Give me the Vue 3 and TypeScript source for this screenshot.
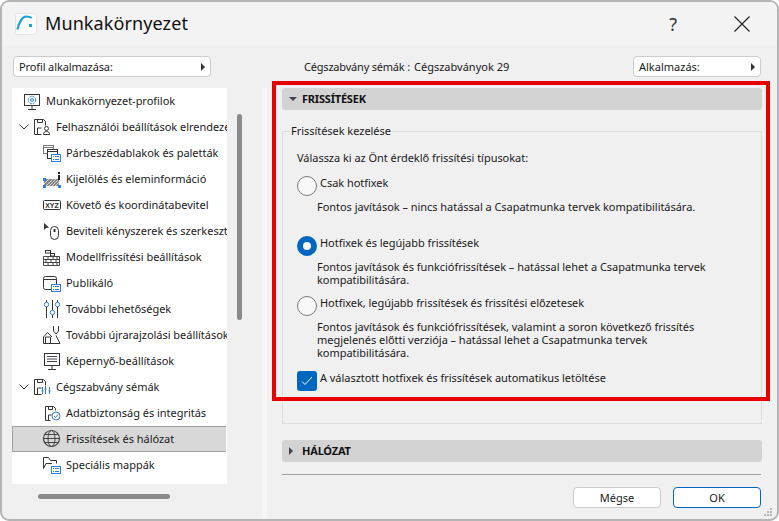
<script setup lang="ts">
interface TreeRow {
  label: string
  icon: string
  depth: number
  open?: boolean
  selected?: boolean
}

const INK = 'fill="none" stroke="#333"'
const DOT = 'fill="#fff" stroke="#2f7de1"'
const listBadge = `<rect x="9.5" y="13.5" width="9" height="7" fill="#fff" stroke="#2f7de1"/><path d="M11 15.5h1M13 15.5h4M11 18.5h1M13 18.5h4" stroke="#2f7de1"/>`
const floppy = `<path d="M2.5 19.5v-15h9l2 2v4M2.500 19.5h7" ${INK}/><path d="M5.500 4.500v3h5v-3M5.500 19v-6h4" ${INK}/>`

// 每个图标都画在 24x24 的格子里
const icons: Record<string, string> = {
  profile: `<rect x="2.5" y="5.5" width="15" height="11" ${INK}/><path d="M10 17v3M6 20.500h8" ${INK}/><circle cx="10" cy="11" r="1.500" ${DOT}/><circle cx="10" cy="11" r="3.800" fill="none" stroke="#2f7de1" stroke-dasharray="2 1"/>`,
  userDisk: `${floppy}<circle cx="14.500" cy="13.500" r="2" ${INK}/><path d="M11.500 19.500c0-2 1-3 3-3s3 1 3 3z" ${INK}/>`,
  dialogs: `<rect x="1.5" y="4.5" width="10" height="8" fill="#fff" stroke="#777"/><path d="M1.500 6.500h10" stroke="#777"/><rect x="5.500" y="8.500" width="10" height="9" fill="#fff" stroke="#333"/><path d="M5.500 10.500h10" stroke="#333"/>${listBadge}`,
  selection: `<path d="M2 12h15v7H2z" fill="#888"/><path d="M2 14l2-2M2 17l5-5M4 19l7-7M7 19l7-7M10 19l7-7M13 19l4-4" stroke="#ccc"/><rect x="1" y="11" width="3" height="3" fill="#2f7de1"/><rect x="1" y="18" width="3" height="3" fill="#2f7de1"/><rect x="16" y="18" width="3" height="3" fill="#2f7de1"/><rect x="16" y="5" width="2" height="2" fill="#222"/><rect x="16" y="8" width="2" height="5" fill="#222"/>`,
  xyz: `<rect x="1.5" y="7.5" width="17" height="9" rx="1" ${INK}/><text x="10" y="14.500" text-anchor="middle" font-family="Liberation Sans, sans-serif" font-size="7" font-weight="700" fill="#333">XYZ</text>`,
  mouse: `<path d="M2 4v7l2-2 3-.5z" fill="#333"/><rect x="8.500" y="7.500" width="8" height="13" rx="4" ${INK}/><path d="M12.500 10v3" stroke="#333" stroke-width="2"/>`,
  bricks: `<rect x="3.5" y="5.500" width="5" height="2.500" ${INK}/><rect x="8.500" y="8.500" width="4" height="2.500" ${INK}/><path d="M1.500 11.500h16v9h-16zM1.500 14.500h16M1.500 17.500h16M6 11.500v3M11 11.500v3M15 11.500v3M4 14.500v3M9 14.500v3M14 14.500v3M6 17.500v3M11 17.500v3M15 17.500v3" fill="none" stroke="#333" stroke-width=".9"/>`,
  publish: `<rect x="1.5" y="5.500" width="13" height="13" rx="2" ${INK}/><path d="M1.500 8.500h13" ${INK}/>${listBadge}`,
  options: `<path d="M4.500 3v2M4.500 10v11M10.500 3v10M10.500 18v3M15.500 3v2M15.500 10v11" ${INK}/><circle cx="4.500" cy="7.500" r="2.200" ${DOT}/><circle cx="10.500" cy="15.500" r="2.200" ${DOT}/><circle cx="15.500" cy="7.500" r="2.200" ${DOT}/>`,
  redraw: `<path d="M1.500 14l4-4.500 4.500 4.500M1.500 14v6.500h16.500l-4-8M3.500 20v-6h5v6" ${INK}/><path d="M11.500 3v5l2.500 3 2.500-3V3" ${INK}/>`,
  screen: `<rect x="2.5" y="4.500" width="15" height="12" ${INK}/><path d="M5 7.500h10M5 10h10M5 12.500h10" stroke="#445"/><path d="M10 17v3M6 20.500h8" ${INK}/>`,
  standards: `${floppy}<path d="M10.500 12v7M13.500 11v8M17.500 12v7" stroke="#2f7de1"/><path d="M9.500 16h2M12.500 14h2M16.500 16h2" stroke="#2f7de1"/>`,
  security: `<path d="M3.500 19.500v-14h8l2 2v2M3.500 19.500h5" ${INK}/><path d="M6.500 5.500v3h4v-3M6.500 19v-5h3" ${INK}/><circle cx="14" cy="15" r="4" fill="#fff" stroke="#2f7de1"/><path d="M12 15l1.500 1.500 2.500-3" fill="none" stroke="#2f7de1"/>`,
  globe: `<circle cx="9.500" cy="11.500" r="8" fill="none" stroke="#444" stroke-width="1.200"/><ellipse cx="9.500" cy="11.500" rx="3.500" ry="8" fill="none" stroke="#444"/><path d="M1.500 11.500h16M2.500 7.500h14M2.500 15.500h14" stroke="#444"/>`,
  folder: `<path d="M1.500 15.500v-11h5l2 3h6v3M1.500 15.500l2.500-5h6" ${INK}/>${listBadge}`
}

const rows: TreeRow[] = [
  { label: 'Munkakörnyezet-profilok', icon: 'profile', depth: 0 },
  { label: 'Felhasználói beállítások elrendezése', icon: 'userDisk', depth: 1, open: true },
  { label: 'Párbeszédablakok és paletták', icon: 'dialogs', depth: 2 },
  { label: 'Kijelölés és eleminformáció', icon: 'selection', depth: 2 },
  { label: 'Követő és koordinátabevitel', icon: 'xyz', depth: 2 },
  { label: 'Beviteli kényszerek és szerkesztés', icon: 'mouse', depth: 2 },
  { label: 'Modellfrissítési beállítások', icon: 'bricks', depth: 2 },
  { label: 'Publikáló', icon: 'publish', depth: 2 },
  { label: 'További lehetőségek', icon: 'options', depth: 2 },
  { label: 'További újrarajzolási beállítások', icon: 'redraw', depth: 2 },
  { label: 'Képernyő-beállítások', icon: 'screen', depth: 2 },
  { label: 'Cégszabvány sémák', icon: 'standards', depth: 1, open: true },
  { label: 'Adatbiztonság és integritás', icon: 'security', depth: 2 },
  { label: 'Frissítések és hálózat', icon: 'globe', depth: 2, selected: true },
  { label: 'Speciális mappák', icon: 'folder', depth: 2 }
]

const options = [
  {
    title: 'Csak hotfixek',
    checked: false,
    lines: ['Fontos javítások – nincs hatással a Csapatmunka tervek kompatibilitására.'],
    height: 60
  },
  {
    title: 'Hotfixek és legújabb frissítések',
    checked: true,
    lines: [
      'Fontos javítások és funkciófrissítések – hatással lehet a Csapatmunka tervek',
      'kompatibilitására.'
    ],
    height: 60
  },
  {
    title: 'Hotfixek, legújabb frissítések és frissítési előzetesek',
    checked: false,
    lines: [
      'Fontos javítások és funkciófrissítések, valamint a soron következő frissítés',
      'megjelenés előtti verziója – hatással lehet a Csapatmunka tervek',
      'kompatibilitására.'
    ],
    height: 75
  }
]

// 右下角的缩放手柄
const gripDots = [
  [6, 0],
  [3, 3],
  [6, 3],
  [0, 6],
  [3, 6],
  [6, 6]
]
</script>

<template>
  <div class="window">
    <header class="titlebar">
      <svg class="logo" width="22" height="22" viewBox="0 0 22 22">
        <rect x="0.5" y="0.5" width="21" height="21" rx="2" fill="#fbfbfb" stroke="#e4e4e4" />
        <path d="M2.500 16.500C4 9 7.500 3.500 11 3.500c2.500 0 4.500.5 5.800 1.500" fill="none" stroke="#17a3d6" stroke-width="2.200" />
        <rect x="14" y="11" width="3" height="3" fill="#17a3d6" />
      </svg>
      <h1 class="title">Munkakörnyezet</h1>
      <span class="help">?</span>
      <svg class="close" width="16" height="16" viewBox="0 0 16 16">
        <path d="M.5 .5l15 15M15.500 .5l-15 15" stroke="#222" stroke-width="1.200" />
      </svg>
    </header>

    <div class="content">
      <aside class="left">
        <div class="select profile-select"><span>Profil alkalmazása:</span><i class="arrow"></i></div>
        <div class="tree-wrap">
          <ul class="tree">
            <li
              v-for="row in rows"
              :key="row.label"
              class="row"
              :class="['depth-' + row.depth, { selected: row.selected }]"
            >
              <svg v-if="row.open" class="chevron" width="10" height="6" viewBox="0 0 10 6">
                <path d="M.5 .5L5 5 9.500 .5" fill="none" stroke="#333" />
              </svg>
              <svg class="icon" width="24" height="24" viewBox="0 0 24 24" v-html="icons[row.icon]"></svg>
              <span class="row-label">{{ row.label }}</span>
            </li>
          </ul>
          <div class="vscroll"><div class="vthumb"></div></div>
        </div>
        <div class="hscroll"><div class="hthumb"></div></div>
      </aside>

      <div class="divider"></div>

      <main class="right">
        <div class="top-line">
          <span class="scheme-key">Cégszabvány sémák :</span>
          <span class="scheme-val">Cégszabványok 29</span>
          <div class="select apply-select"><span>Alkalmazás:</span><i class="arrow"></i></div>
        </div>

        <section class="panel">
          <div class="bar">
            <i class="tri-down"></i>
            <span class="bar-text">FRISSÍTÉSEK</span>
          </div>

          <div class="group">
            <span class="legend">Frissítések kezelése</span>
            <p class="intro">Válassza ki az Önt érdeklő frissítési típusokat:</p>

            <div
              v-for="opt in options"
              :key="opt.title"
              class="option"
              :style="{ height: opt.height + 'px' }"
            >
              <div class="option-head">
                <span class="radio" :class="{ on: opt.checked }"></span>
                <span class="option-title">{{ opt.title }}</span>
              </div>
              <p class="desc">
                <span v-for="line in opt.lines" :key="line" class="desc-line">{{ line }}</span>
              </p>
            </div>

            <div class="option-head">
              <span class="check">
                <svg width="12" height="10" viewBox="0 0 12 10">
                  <path d="M1 5.500L4 8.500 11 1" fill="none" stroke="#fff" />
                </svg>
              </span>
              <span class="option-title">A választott hotfixek és frissítések automatikus letöltése</span>
            </div>
          </div>

          <div class="bar network">
            <i class="tri-right"></i>
            <span class="bar-text">HÁLÓZAT</span>
          </div>
        </section>

        <footer class="footer">
          <button class="btn">Mégse</button>
          <button class="btn primary">OK</button>
        </footer>
      </main>
    </div>

    <div class="red-frame"></div>
    <svg class="grip" width="8" height="8" viewBox="0 0 8 8">
      <rect v-for="d in gripDots" :key="d.join()" :x="d[0]" :y="d[1]" width="2" height="2" fill="#b5b5b5" />
    </svg>
  </div>
</template>

<style>
html,
body {
  margin: 0;
  background: #fff;
}
</style>

<style scoped>
.window {
  position: relative;
  box-sizing: border-box;
  width: 779px;
  height: 521px;
  background: #f0f0f0;
  border: 2px solid #b4b4b4;
  border-radius: 9px;
  overflow: hidden;
  font-family: "Noto Sans", sans-serif;
  font-size: 11px;
  color: #1a1a1a;
}

.titlebar {
  display: flex;
  align-items: center;
  height: 43px;
  padding: 0 27px 0 13px;
  background: #f3f3f3;
}

.logo {
  flex: none;
  margin-right: 8px;
}

.title {
  flex: 1;
  margin: 0;
  padding-bottom: 2px;
  font-size: 18px;
  font-weight: 400;
  letter-spacing: 0.1px;
  color: #111;
}

.help {
  margin-right: 57px;
  font-size: 18px;
  color: #333;
}

.content {
  display: flex;
  height: 474px;
}

.left {
  flex: none;
  width: 260px;
  padding: 11px 0 0 10px;
  box-sizing: border-box;
}

.select {
  display: flex;
  align-items: center;
  justify-content: space-between;
  box-sizing: border-box;
  height: 21px;
  padding: 0 5px;
  background: #fff;
  border: 1px solid #ccc;
  border-radius: 4px;
}

.profile-select {
  width: 198px;
  margin-left: 1px;
  letter-spacing: -0.12px;
}

.arrow {
  width: 0;
  height: 0;
  border-left: 4px solid #333;
  border-top: 4px solid transparent;
  border-bottom: 4px solid transparent;
}

.tree-wrap {
  display: flex;
  margin-top: 11px;
}

.tree {
  width: 215px;
  height: 396px;
  margin: 0;
  padding: 0;
  background: #fff;
  list-style: none;
  overflow: hidden;
}

.row {
  display: flex;
  align-items: center;
  box-sizing: border-box;
  height: 26px;
  white-space: nowrap;
  overflow: hidden;
}

.row-label {
  margin-bottom: 2px;
  letter-spacing: -0.03px;
}

.depth-0 {
  padding-left: 10px;
}

.depth-1 {
  padding-left: 7px;
}

.depth-2 {
  padding-left: 30px;
}

.selected {
  width: 214px;
  padding-left: 29px;
  background: #d8d8d8;
  border: 1px solid #a0a0a0;
  border-right: none;
}

.chevron {
  flex: none;
  margin-right: 3px;
}

.icon {
  flex: none;
}

.vscroll {
  margin-left: 10px;
  padding-top: 26px;
}

.vthumb {
  width: 5px;
  height: 206px;
  background: #8a8a8a;
  border-radius: 3px;
}

.hscroll {
  padding: 10px 0 0 26px;
}

.hthumb {
  width: 132px;
  height: 5px;
  background: #8a8a8a;
  border-radius: 3px;
}

/* 左右两栏之间的浅色分隔条 */
.divider {
  flex: none;
  width: 5px;
  margin-top: 43px;
  background: #f6f6f6;
}

.right {
  flex: 1;
  padding-top: 11px;
  min-width: 0;
}

.top-line {
  display: flex;
  align-items: center;
  height: 21px;
  padding: 0 16px 0 37px;
}

.scheme-key {
  width: 110px;
  letter-spacing: -0.2px;
}

.scheme-val {
  flex: 1;
}

.apply-select {
  width: 128px;
}

.panel {
  padding: 11px 15px 0 15px;
}

.bar {
  display: flex;
  align-items: center;
  height: 22px;
  padding-left: 7px;
  background: #d3d3d3;
  border-radius: 3px;
  font-weight: 700;
  color: #111;
}

.bar-text {
  margin-bottom: 2px;
  letter-spacing: -0.2px;
}

.tri-down {
  width: 0;
  height: 0;
  margin-right: 5px;
  border-top: 4px solid #444;
  border-left: 4px solid transparent;
  border-right: 4px solid transparent;
}

.tri-right {
  width: 0;
  height: 0;
  margin-right: 9px;
  border-left: 4px solid #444;
  border-top: 4px solid transparent;
  border-bottom: 4px solid transparent;
}

.group {
  position: relative;
  box-sizing: border-box;
  height: 293px;
  margin-top: 21px;
  padding: 19px 0 0 14px;
  border: 1px solid #dcdcdc;
  letter-spacing: -0.04px;
}

.legend {
  position: absolute;
  top: -8px;
  left: 7px;
  padding: 0 1px;
  line-height: 14px;
  background: #f0f0f0;
}

.intro {
  margin: 0 0 11px;
  line-height: 14px;
}

.option-head {
  display: flex;
  align-items: flex-start;
}

.radio {
  box-sizing: border-box;
  width: 20px;
  height: 20px;
  margin-right: 3px;
  background: #f8f8f8;
  border: 1px solid #7a7a7a;
  border-radius: 50%;
}

.radio.on {
  background: #fff;
  border: 6px solid #0067c0;
}

.option-title {
  line-height: 14px;
}

.desc {
  margin: 4px 0 0 20px;
  line-height: 13px;
}

.desc-line {
  display: block;
}

.check {
  display: flex;
  align-items: center;
  justify-content: center;
  box-sizing: border-box;
  width: 20px;
  height: 20px;
  margin-right: 3px;
  background: #0067c0;
  border-radius: 3px;
}

.network {
  margin-top: 16px;
}

.footer {
  display: flex;
  justify-content: flex-end;
  gap: 12px;
  margin: 12px 16px 0 15px;
  padding-top: 12px;
  border-top: 1px solid #a0a0a0;
}

.btn {
  box-sizing: border-box;
  width: 88px;
  height: 21px;
  padding: 0;
  font: inherit;
  color: #1a1a1a;
  background: #fff;
  border: 1px solid #ccc;
  border-radius: 4px;
}

.primary {
  border-color: #0067c0;
}

/* 红色标注框盖在内容上面 */
.red-frame {
  position: absolute;
  top: 79px;
  left: 270px;
  width: 490px;
  height: 312px;
  border: 4px solid #e60000;
}

.grip {
  position: absolute;
  right: 5px;
  bottom: 3px;
}
</style>
